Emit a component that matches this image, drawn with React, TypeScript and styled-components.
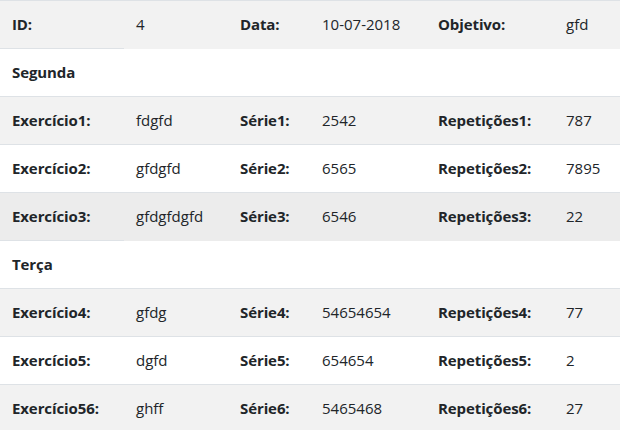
import React from "react";
import styled, { createGlobalStyle, css } from "styled-components";

const GlobalStyle = createGlobalStyle`
  html, body { margin: 0; padding: 0; background: #fff; }
  body {
    font-family: "Open Sans", "Noto Sans", "Liberation Sans", sans-serif;
    font-size: 15px;
    color: #212529;
  }
`;

const Table = styled.table`
  width: 620px;
  border-collapse: collapse;
  table-layout: fixed;
  color: #212529;
`;

type Tone = "stripe" | "plain" | "hover";

const Row = styled.tr<{ $tone: Tone }>`
  ${({ $tone }) =>
    $tone === "stripe"
      ? css`background: #f2f2f2;`
      : $tone === "hover"
      ? css`background: #ececec;`
      : css`background: transparent;`}
`;

const cellBase = css`
  padding: 12px;
  height: 23px;
  line-height: 23px;
  border-top: 1px solid #dee2e6;
  text-align: left;
  vertical-align: top;
  white-space: nowrap;
`;

const LabelCell = styled.th`
  ${cellBase};
  font-weight: 700;
  letter-spacing: -0.1px;
`;

const ValueCell = styled.td`
  ${cellBase};
  font-weight: 400;
`;

const Col = styled.col<{ $w: number }>`
  width: ${({ $w }) => $w}px;
`;

type Pair = [string, string];
type Line = { tone: Tone; pairs: Pair[] } | { tone: Tone; heading: string };

const lines: Line[] = [
  { tone: "stripe", pairs: [["ID:", "4"], ["Data:", "10-07-2018"], ["Objetivo:", "gfd"]] },
  { tone: "plain", heading: "Segunda" },
  { tone: "stripe", pairs: [["Exercício1:", "fdgfd"], ["Série1:", "2542"], ["Repetições1:", "787"]] },
  { tone: "plain", pairs: [["Exercício2:", "gfdgfd"], ["Série2:", "6565"], ["Repetições2:", "7895"]] },
  { tone: "hover", pairs: [["Exercício3:", "gfdgfdgfd"], ["Série3:", "6546"], ["Repetições3:", "22"]] },
  { tone: "plain", heading: "Terça" },
  { tone: "stripe", pairs: [["Exercício4:", "gfdg"], ["Série4:", "54654654"], ["Repetições4:", "77"]] },
  { tone: "plain", pairs: [["Exercício5:", "dgfd"], ["Série5:", "654654"], ["Repetições5:", "2"]] },
  { tone: "stripe", pairs: [["Exercício56:", "ghff"], ["Série6:", "5465468"], ["Repetições6:", "27"]] },
];

const widths = [124, 104, 82, 116, 128, 66];

export default function App() {
  return (
    <>
      <GlobalStyle />
      <Table>
        <colgroup>
          {widths.map((w, i) => (
            <Col key={i} $w={w} />
          ))}
        </colgroup>
        <tbody>
          {lines.map((line, i) => (
            <Row key={i} $tone={line.tone}>
              {"heading" in line ? (
                <LabelCell>{line.heading}</LabelCell>
              ) : (
                line.pairs.map(([k, v]) => (
                  <React.Fragment key={k}>
                    <LabelCell>{k}</LabelCell>
                    <ValueCell>{v}</ValueCell>
                  </React.Fragment>
                ))
              )}
            </Row>
          ))}
        </tbody>
      </Table>
    </>
  );
}
